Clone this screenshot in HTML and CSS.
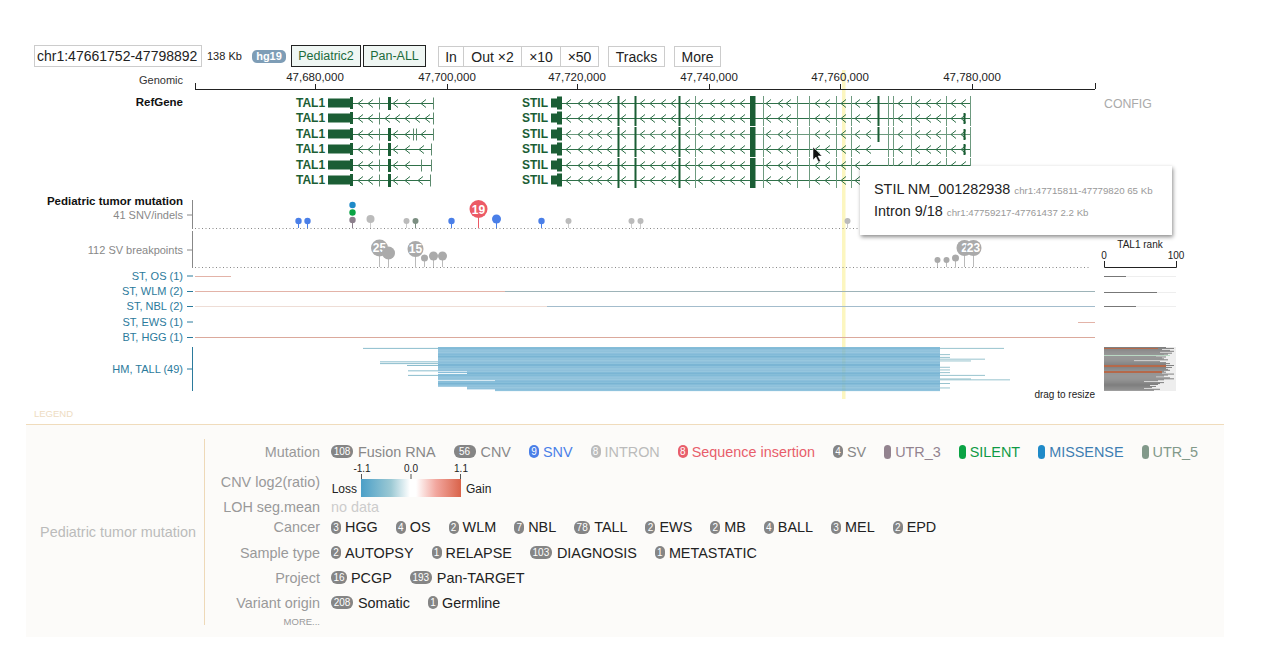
FILE: index.html
```html
<!DOCTYPE html>
<html lang="en">
<head>
    <meta charset="UTF-8">
    <meta name="viewport" content="width=device-width, initial-scale=1.0">
    <title>Genome Browser</title>
    <link rel="stylesheet" href="styles.css">
</head>
<body>
    <!-- Toolbar -->
    <div class="toolbar">
        <input class="coord" type="text" value="chr1:47661752-47798892">
        <span class="span-size">138 Kb</span>
        <span class="genome">hg19</span>
        <button class="dataset">Pediatric2</button>
        <button class="dataset second">Pan-ALL</button>
        <div class="zoom-group">
            <button class="tool">In</button>
            <button class="tool">Out ×2</button>
            <button class="tool">×10</button>
            <button class="tool">×50</button>
        </div>
        <button class="tool solo">Tracks</button>
        <button class="tool solo">More</button>
    </div>

    <!-- Tracks, drawn by app.js -->
    <svg id="tracks" class="tracks" viewBox="0 70 1286 335" width="1286" height="335"></svg>

    <!-- Tooltip over the tracks -->
    <div class="tip">
        <div class="tip-row">STIL NM_001282938 <small>chr1:47715811-47779820 65 Kb</small></div>
        <div class="tip-row">Intron 9/18 <small>chr1:47759217-47761437 2.2 Kb</small></div>
    </div>

    <!-- Legend -->
    <div class="legend-head">LEGEND</div>
    <div class="legend">
        <div class="legend-title">Pediatric tumor mutation</div>
        <div class="legend-body">
            <div class="row">
                <div class="row-label">Mutation</div>
                <div class="row-items muted">
                    <span class="item"><i class="chip wide">108</i>Fusion RNA</span>
                    <span class="item"><i class="chip wide">56</i>CNV</span>
                    <span class="item snv"><i class="chip">9</i>SNV</span>
                    <span class="item intron"><i class="chip">8</i>INTRON</span>
                    <span class="item insertion"><i class="chip">8</i>Sequence insertion</span>
                    <span class="item sv"><i class="chip">4</i>SV</span>
                    <span class="item utr3"><i class="chip slim"></i>UTR_3</span>
                    <span class="item silent"><i class="chip slim"></i>SILENT</span>
                    <span class="item missense"><i class="chip slim"></i>MISSENSE</span>
                    <span class="item utr5"><i class="chip slim"></i>UTR_5</span>
                </div>
            </div>
            <div class="row row-cnv">
                <div class="row-label">CNV log2(ratio)</div>
                <div class="row-items">
                    <svg class="colorbar" width="170" height="36" viewBox="0 0 170 36">
                        <defs>
                            <linearGradient id="cnvScale">
                                <stop offset="0" stop-color="#4b9fc7"/>
                                <stop offset="0.3" stop-color="#9cc9d4"/>
                                <stop offset="0.49" stop-color="#ffffff"/>
                                <stop offset="0.55" stop-color="#ffffff"/>
                                <stop offset="0.75" stop-color="#f2a79f"/>
                                <stop offset="1" stop-color="#d9634a"/>
                            </linearGradient>
                        </defs>
                        <text class="scale-num" x="37" y="8" text-anchor="middle">-1.1</text>
                        <text class="scale-num" x="86" y="8" text-anchor="middle">0.0</text>
                        <text class="scale-num" x="136" y="8" text-anchor="middle">1.1</text>
                        <path d="M36.500 10v5M86 10v5M135.500 10v5" stroke="#555" fill="none"/>
                        <rect x="36" y="15" width="100" height="18" fill="url(#cnvScale)"/>
                        <text class="scale-word" x="32" y="29" text-anchor="end">Loss</text>
                        <text class="scale-word" x="141" y="29">Gain</text>
                    </svg>
                </div>
            </div>
            <div class="row row-loh">
                <div class="row-label">LOH seg.mean</div>
                <div class="row-items nodata">no data</div>
            </div>
            <div class="row row-cancer">
                <div class="row-label">Cancer</div>
                <div class="row-items">
                    <span class="item"><i class="chip">3</i>HGG</span>
                    <span class="item"><i class="chip">4</i>OS</span>
                    <span class="item"><i class="chip">2</i>WLM</span>
                    <span class="item"><i class="chip">7</i>NBL</span>
                    <span class="item"><i class="chip mid">78</i>TALL</span>
                    <span class="item"><i class="chip">2</i>EWS</span>
                    <span class="item"><i class="chip">2</i>MB</span>
                    <span class="item"><i class="chip">4</i>BALL</span>
                    <span class="item"><i class="chip">3</i>MEL</span>
                    <span class="item"><i class="chip">2</i>EPD</span>
                </div>
            </div>
            <div class="row">
                <div class="row-label">Sample type</div>
                <div class="row-items">
                    <span class="item"><i class="chip">2</i>AUTOPSY</span>
                    <span class="item"><i class="chip">1</i>RELAPSE</span>
                    <span class="item"><i class="chip wide">103</i>DIAGNOSIS</span>
                    <span class="item"><i class="chip">1</i>METASTATIC</span>
                </div>
            </div>
            <div class="row">
                <div class="row-label">Project</div>
                <div class="row-items">
                    <span class="item"><i class="chip mid">16</i>PCGP</span>
                    <span class="item"><i class="chip wide">193</i>Pan-TARGET</span>
                </div>
            </div>
            <div class="row">
                <div class="row-label">Variant origin</div>
                <div class="row-items">
                    <span class="item"><i class="chip wide">208</i>Somatic</span>
                    <span class="item"><i class="chip">1</i>Germline</span>
                </div>
            </div>
            <div class="more">MORE...</div>
        </div>
    </div>

    <script src="app.js"></script>
</body>
</html>
```

FILE: styles.css
```css
* {
    margin: 0;
    padding: 0;
    box-sizing: border-box;
}

body {
    font-family: 'Liberation Sans', Arial, sans-serif;
    background: white;
    color: #222;
    position: relative;
    overflow: hidden;
    height: 672px;
}

/* toolbar */
.toolbar {
    display: flex;
    align-items: center;
    height: 22px;
    margin-top: 45px;
    padding-left: 34px;
}

.coord {
    width: 168px;
    height: 22px;
    border: 1px solid #ccc;
    padding: 0 2px;
    font: 14px 'Liberation Sans', Arial, sans-serif;
    color: #222;
}

.span-size {
    font-size: 11px;
    margin-left: 5px;
    width: 45px;
}

.genome {
    width: 34px;
    height: 13px;
    line-height: 13px;
    border-radius: 5px;
    background: #7e9db6;
    color: white;
    font-size: 11px;
    font-weight: bold;
    text-align: center;
}

.dataset {
    height: 22px;
    margin-left: 5px;
    width: 70px;
    border: 1px solid #222;
    background: #eff6f3;
    color: #1c6b3c;
    font: 12.500px 'Liberation Sans', Arial, sans-serif;
}

.dataset.second {
    margin-left: 2px;
    width: 63px;
}

.zoom-group {
    display: flex;
    margin-left: 12px;
}

.tool {
    height: 21px;
    margin-top: 1px;
    border: 1px solid #ccc;
    margin-right: -1px;
    padding: 0;
    background: white;
    color: #222;
    font: 14px 'Liberation Sans', Arial, sans-serif;
}

.zoom-group .tool:nth-child(1) { width: 26px; }
.zoom-group .tool:nth-child(2) { width: 59px; }
.zoom-group .tool:nth-child(3) { width: 40px; }
.zoom-group .tool:nth-child(4) { width: 39px; }

.tool.solo {
    width: 57px;
    margin-left: 10px;
    margin-right: 0;
}

.tool.solo:last-child {
    width: 47px;
    margin-left: 9px;
}

/* tracks */
.tracks {
    display: block;
    margin-top: 3px;
}

.tracks text {
    font-family: 'Liberation Sans', Arial, sans-serif;
    font-size: 11px;
    fill: #333;
}

.tracks .axis-num { font-size: 11.500px; fill: #222; }
.tracks .track-name { font-size: 11.500px; font-weight: bold; fill: #111; }
.tracks .track-sub { fill: #888; }
.tracks .gene { font-size: 12px; font-weight: bold; fill: #1b5e35; }
.tracks .config { font-size: 12.300px; fill: #aaa; }
.tracks .sample { fill: #2b7a9c; }
.tracks .small { font-size: 10px; fill: #222; }
.tracks .bubble { font-size: 12px; font-weight: bold; fill: white; }

/* tooltip */
.tip {
    position: absolute;
    left: 860px;
    top: 166px;
    width: 312px;
    height: 69px;
    padding: 13px 14px;
    background: white;
    box-shadow: 1px 2px 4px rgba(0, 0, 0, 0.45);
}

.tip-row {
    font-size: 14.400px;
    line-height: 21px;
    color: #222;
    white-space: nowrap;
}

.tip-row small {
    font-size: 9.700px;
    color: #999;
}

/* legend */
.legend-head {
    height: 19px;
    padding: 3px 0 0 34px;
    font-size: 9.500px;
    color: #eedcc2;
}

.legend {
    display: flex;
    width: 1198px;
    height: 213px;
    margin-left: 26px;
    padding-top: 14px;
    background: #fcfbf9;
    border-top: 1px solid #f0dcbc;
}

.legend-title {
    width: 179px;
    height: 186px;
    padding: 0 8px 0 0;
    border-right: 1px solid #eed9b8;
    display: flex;
    align-items: center;
    justify-content: flex-end;
    font-size: 14.400px;
    color: #bbb;
    white-space: nowrap;
}

.row {
    display: flex;
    align-items: center;
    height: 25px;
    font-size: 14.400px;
}

.row-cnv { height: 36px; }
.row-loh { height: 14px; }
.row-cancer { height: 26px; }

.row-label {
    width: 115px;
    text-align: right;
    color: #999;
}

.row-items {
    display: flex;
    align-items: center;
    margin-left: 11px;
    white-space: nowrap;
}

.muted { color: #888; }
.nodata { color: #ccc; }

.item {
    display: flex;
    align-items: center;
    margin-right: 18px;
}

.chip {
    width: 10px;
    height: 13px;
    margin-right: 4px;
    border-radius: 6px;
    background: #858585;
    color: white;
    font-style: normal;
    font-size: 10px;
    line-height: 13px;
    text-align: center;
}

.chip.mid { width: 16px; }
.chip.wide { width: 22px; margin-right: 5px; }
.chip.slim { width: 7px; height: 14px; }

.snv { color: #4a7fe8; }
.snv .chip { background: #4a7fe8; }
.intron { color: #bbb; }
.intron .chip { background: #bbb; }
.insertion { color: #e85e6b; }
.insertion .chip { background: #e85e6b; }
.utr3 { color: #93838f; }
.utr3 .chip { background: #93838f; }
.silent { color: #0f9a45; }
.silent .chip { background: #0aa344; }
.missense { color: #3c7eb2; }
.missense .chip { background: #1f8ac8; }
.utr5 { color: #82998a; }
.utr5 .chip { background: #82998a; }

.colorbar {
    display: block;
    margin-left: -6px;
}

.colorbar text {
    font-family: 'Liberation Sans', Arial, sans-serif;
    fill: #222;
}

.scale-num { font-size: 10px; }
.scale-word { font-size: 12px; }

.more {
    width: 115px;
    padding-top: 1px;
    text-align: right;
    font-size: 9.500px;
    color: #999;
}
```

FILE: app.js
```js
const svg = document.getElementById('tracks');
let out = '';

function line(x1, y1, x2, y2, color, w) {
    out += `<line x1="${x1}" y1="${y1}" x2="${x2}" y2="${y2}" stroke="${color}" stroke-width="${w || 1}"/>`;
}
function text(x, y, str, cls, anchor) {
    out += `<text x="${x}" y="${y}" class="${cls || ''}" text-anchor="${anchor || 'start'}">${str}</text>`;
}
function rect(x, y, w, h, color) {
    out += `<rect x="${x}" y="${y}" width="${w}" height="${h}" fill="${color}"/>`;
}
function dot(x, y, r, color) {
    out += `<circle cx="${x}" cy="${y}" r="${r}" fill="${color}"/>`;
}

// highlighted region
rect(842, 70, 3.500, 329, '#fcf6c0');

// genomic axis
text(183, 84, 'Genomic', '', 'end');
line(195, 89.500, 1095, 89.500, '#222');
line(195.500, 83, 195.500, 89, '#222');
line(1095.500, 83, 1095.500, 89, '#222');
[[315, '47,680,000'], [447, '47,700,000'], [577, '47,720,000'], [709, '47,740,000'], [840, '47,760,000'], [972, '47,780,000']].forEach(t => {
    line(t[0] + 0.500, 84, t[0] + 0.500, 89, '#222');
    text(t[0], 81, t[1], 'axis-num', 'middle');
});

text(183, 106, 'RefGene', 'track-name', 'end');
text(1104, 108, 'CONFIG', 'config');

// gene rows
const GREEN = '#1b5e35';
const LINE = '#2f7049';
const rowsY = [103, 118, 134, 149, 165, 180];

function chevron(x, y) {
    out += `<path d="M${x + 3} ${y - 4}L${x - 2} ${y}L${x + 3} ${y + 4}" fill="none" stroke="${LINE}"/>`;
}

const tal1 = [
    { end: 433, thin: [379, 433], thick: [389], arrows: [360, 370, 395, 407, 423] },
    { end: 433, thin: [379, 433], thick: [], arrows: [360, 370, 387, 397, 407, 417, 427] },
    { end: 433, thin: [379, 413, 416, 433], thick: [389], arrows: [360, 370, 395, 407, 423] },
    { end: 431, thin: [379, 431], thick: [389], arrows: [360, 370, 395, 407, 421] },
    { end: 431, thin: [379, 421, 431], thick: [389], arrows: [360, 370, 395, 407] },
    { end: 430, thin: [379, 430], thick: [389], arrows: [360, 370, 395, 407, 420] }
];

tal1.forEach((g, i) => {
    const y = rowsY[i];
    text(296, y + 4, 'TAL1', 'gene');
    rect(328, y - 4.500, 23, 9, GREEN);
    rect(350, y - 6, 3, 12, GREEN);
    line(353, y + 0.500, g.end, y + 0.500, LINE);
    g.thin.forEach(x => line(x + 0.500, y - 5.500, x + 0.500, y + 6.500, '#5d8a6e'));
    g.thick.forEach(x => rect(x - 1, y - 6, 3, 13, GREEN));
    g.arrows.forEach(x => chevron(x, y + 0.500));
});

const stilArrows = [568, 580, 590, 599, 609, 623, 642, 652, 663, 673, 687, 700, 712, 722, 732, 742, 768, 780, 788, 817, 827, 843, 857, 868, 900, 917, 928, 938, 953, 963];
const stilDark = [618, 635, 679];
const stilThin = [695, 763, 797, 809, 836, 851, 888, 893, 911, 946, 970];

rowsY.forEach((y, i) => {
    text(522, y + 4, 'STIL', 'gene');
    rect(551, y - 4.500, 7, 9, GREEN);
    rect(557, y - 6.500, 5, 13, GREEN);
    line(562, y + 0.500, 971, y + 0.500, i === 2 ? '#6c9a7e' : LINE);
    stilArrows.forEach(x => chevron(x, y + 0.500));
    stilDark.forEach(x => rect(x - 0.500, y - 7, 2, 15, GREEN));
    stilThin.forEach(x => line(x + 0.500, y - 7, x + 0.500, y + 8, '#6d9a7f'));
    rect(750, y - 7, 5.500, 15, GREEN);
    if (i < 3) rect(877.500, y - 7, 2, 15, GREEN);
    if (i > 0 && i < 4) rect(963.500, y - 5, 2, 11, GREEN);
});

// mouse pointer
out += '<path d="M813 147v13l3-3 2.500 5 2-1-2.500-5h4z" fill="#111" stroke="#fff" stroke-width="0.500"/>';

// mutation tracks
text(183, 205, 'Pediatric tumor mutation', 'track-name', 'end');
text(183, 219, '41 SNV/indels', 'track-sub', 'end');
line(192.500, 200, 192.500, 229, '#888');
line(187, 215, 192, 215, '#888');
text(183, 254, '112 SV breakpoints', 'track-sub', 'end');
line(192.500, 231, 192.500, 268, '#888');
line(187, 250, 192, 250, '#888');

function baseline(y) {
    out += `<line x1="195" y1="${y}" x2="1091" y2="${y}" stroke="#888" stroke-dasharray="1 2.500"/>`;
}
baseline(228.500);
baseline(267.500);

const BLUE = '#4a7fe8';
const GREY = '#bbb';
const snv = [
    [298, 221, 3.200, BLUE], [307, 221, 3.200, BLUE], [370, 219, 4, GREY], [406, 221, 3, GREY],
    [415, 221, 3, '#7c8f82'], [451, 221, 3.200, BLUE], [496, 219, 4.500, BLUE], [541, 221, 3.200, BLUE],
    [568, 221, 3, GREY], [631, 221, 3, GREY], [640, 221, 3, GREY], [847, 221, 3, GREY]
];
snv.forEach(d => {
    line(d[0] + 0.500, d[1], d[0] + 0.500, 228, d[3] === GREY ? '#ccc' : d[3]);
    dot(d[0] + 0.500, d[1], d[2], d[3]);
});
line(352.500, 220, 352.500, 228, '#8c7f8c');
dot(352.500, 205, 3.200, '#1f8ac8');
dot(352.500, 212.500, 3.200, '#0aa344');
dot(352.500, 220, 3.200, '#8c7f8c');
line(478.500, 209, 478.500, 228, '#ec5a66');
dot(478.500, 209, 9, '#ec5a66');
text(478.500, 213.500, '19', 'bubble', 'middle');

const sv = [
    [379, 248, 8.500, '25'], [388, 253, 6.500], [415, 249, 8, '15'], [424, 258, 3.500], [433, 256, 4.500], [442, 256, 4.500],
    [937, 260, 3], [946, 260, 3], [955, 258, 3.500], [964, 248, 8, '2'], [973, 248, 8, '23']
];
sv.forEach(d => {
    line(d[0] + 0.500, d[1], d[0] + 0.500, 267, '#bbb');
    dot(d[0] + 0.500, d[1], d[2], '#aaa');
    if (d[3]) text(d[0] + 0.500, d[1] + 4, d[3], 'bubble', 'middle');
});

// sample rows
const PINK = '#e3b3a8';
[
    [280, 276, 'ST, OS (1)'], [295, 291.500, 'ST, WLM (2)'], [310, 306.500, 'ST, NBL (2)'],
    [326, 322, 'ST, EWS (1)'], [341, 337.500, 'BT, HGG (1)']
].forEach(s => {
    text(183, s[0], s[2], 'sample', 'end');
    line(187, s[1], 193, s[1], '#2b7a9c');
});
line(195, 276.500, 231, 276.500, PINK);
line(195, 291.500, 505, 291.500, PINK);
line(505, 291.500, 1095, 291.500, '#9db3b8');
line(195, 306.500, 547, 306.500, '#eeddd6');
line(547, 306.500, 1095, 306.500, '#a3bccc');
line(1078, 322.500, 1095, 322.500, PINK);
line(195, 337.500, 1095, 337.500, '#dba99c');

text(183, 373, 'HM, TALL (49)', 'sample', 'end');
line(192.500, 347, 192.500, 391, '#2b7a9c');
line(187, 369, 192, 369, '#2b7a9c');

// expression block, one row per sample
const startOver = { 1: 363, 16: 380, 18: 380, 20: 407, 26: 408, 31: 408, 27: 467, 29: 467, 37: 495, 44: 467, 45: 467, 46: 467, 47: 495, 48: 495 };
const endOver = { 1: 1004, 8: 950, 11: 950, 13: 985, 15: 971, 22: 950, 25: 950, 28: 950, 31: 985, 35: 971, 36: 1010, 40: 950, 45: 950 };
for (let i = 0; i < 49; i++) {
    const y = 347 + i * 0.900;
    const start = startOver[i] || 438;
    const end = endOver[i] || 940;
    const color = i % 3 === 0 ? '#7cb8d6' : '#6cadd0';
    if (start < 438) {
        rect(start, y, 438 - start, 0.900, '#7fb6c8');
        rect(438, y, 502, 0.900, color);
    } else {
        rect(start, y, 940 - start, 0.900, color);
    }
    if (end > 940) rect(940, y, end - 940, 0.900, '#8dbdc9');
}
text(1095, 398, 'drag to resize', 'small', 'end');

// rank column
text(1140, 248, 'TAL1 rank', 'small', 'middle');
text(1104, 259, '0', 'small', 'middle');
text(1176, 259, '100', 'small', 'middle');
out += '<path d="M1104.500 261v6.500h72v-6.500" fill="none" stroke="#222"/>';
[[276, 22], [292, 53], [306, 32]].forEach(r => {
    rect(1104, r[0], 72, 1, '#eee');
    rect(1104, r[0], r[1], 1, '#777');
});
rect(1104, 347, 72, 44, '#eee');
const rankW = [62, 70, 58, 66, 70, 56, 68, 64, 60, 52, 62, 58, 60, 64, 30, 56, 62, 66, 62, 70, 58, 68, 62, 64, 66, 60, 62, 58, 70, 64, 60, 52, 66, 70, 60, 54, 40, 60, 56, 54, 46, 52, 48, 40, 56, 50];
rankW.forEach((w, i) => rect(1104, 347 + i * 0.950, w, 0.950, '#7b7b7b'));
[[348, 54, 1], [365, 62, 2], [371, 58, 2]].forEach(b => rect(1104, b[0], b[1], b[2], '#b5694a'));
rect(1104, 355, 66, 1, '#b9d8c3');

svg.innerHTML = out;
```
